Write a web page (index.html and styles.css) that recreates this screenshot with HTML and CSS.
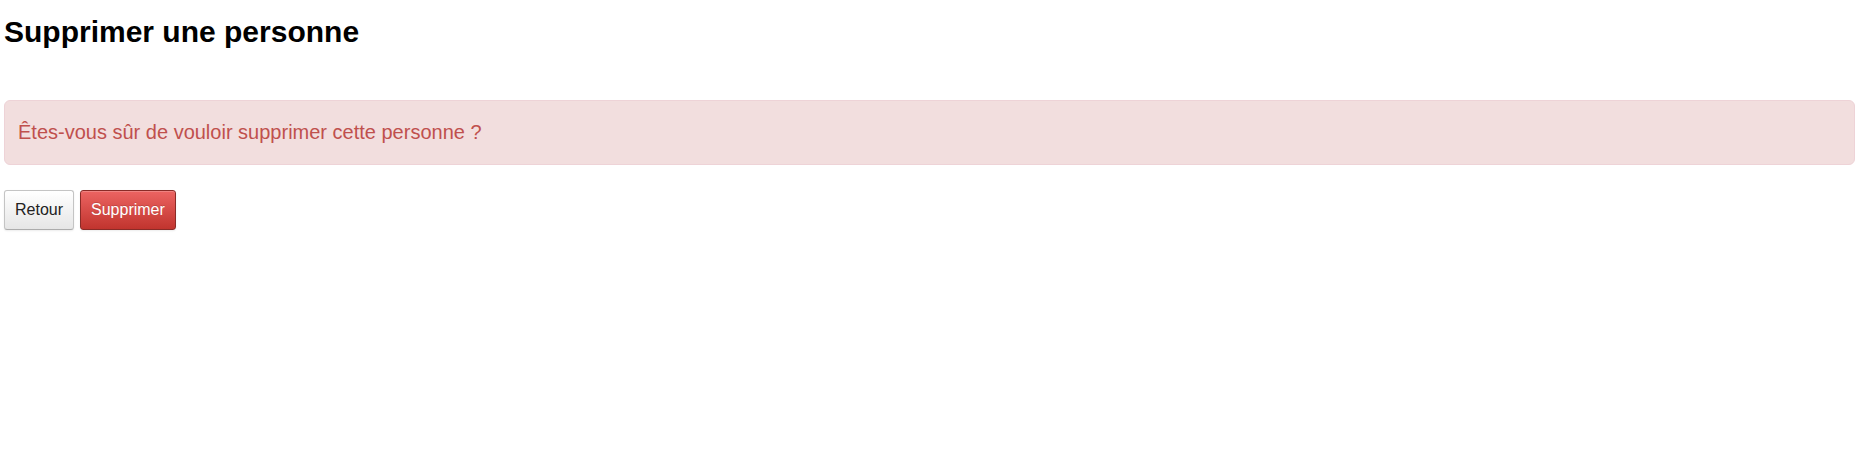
FILE: index.html
```html
<!DOCTYPE html>
<html lang="fr">
<head>
<meta charset="utf-8">
<title>Supprimer une personne</title>
<link rel="stylesheet" href="styles.css">
</head>
<body>
<div class="page">
  <h1 class="title">Supprimer une personne</h1>
  <div class="alert alert-danger">Êtes-vous sûr de vouloir supprimer cette personne ?</div>
  <form class="actions">
    <button type="button" class="btn">Retour</button>
    <button type="submit" class="btn btn-danger">Supprimer</button>
  </form>
</div>
</body>
</html>
```

FILE: styles.css
```css
html, body {
  margin: 0;
  padding: 0;
  background: #fff;
}

body {
  font-family: "Liberation Sans", Arial, sans-serif;
  color: #000;
}

.page {
  box-sizing: border-box;
  min-height: 100vh;
  padding: 0 1px 0 4px;
}

.title {
  margin: 0;
  padding-top: 14px;
  font-size: 30px;
  line-height: 36px;
  font-weight: bold;
}

.alert {
  margin-top: 50px;
  padding: 20px 13px 21px;
  font-size: 20px;
  line-height: 22px;
  border-radius: 6px;
}

.alert-danger {
  background: #f2dede;
  border: 1px solid #eed3d7;
  color: #c0504d;
}

.actions {
  display: flex;
  gap: 6px;
  margin-top: 25px;
}

.btn {
  font-family: "Liberation Sans", Arial, sans-serif;
  font-size: 16px;
  line-height: 19px;
  padding: 9px 10px 10px;
  border-radius: 3px;
  border: 1px solid #c4c4c4;
  border-bottom-color: #acacac;
  background: linear-gradient(#ffffff, #e6e6e6);
  color: #222;
  box-shadow: inset 0 1px 0 rgba(255,255,255,0.2), 0 1px 2px rgba(0,0,0,0.08);
  cursor: pointer;
}

.btn-danger {
  color: #fff;
  border-color: #8a2b27;
  background: linear-gradient(#ec6462, #c1342e);
  text-shadow: 0 -1px 0 rgba(0,0,0,0.15);
}
```
